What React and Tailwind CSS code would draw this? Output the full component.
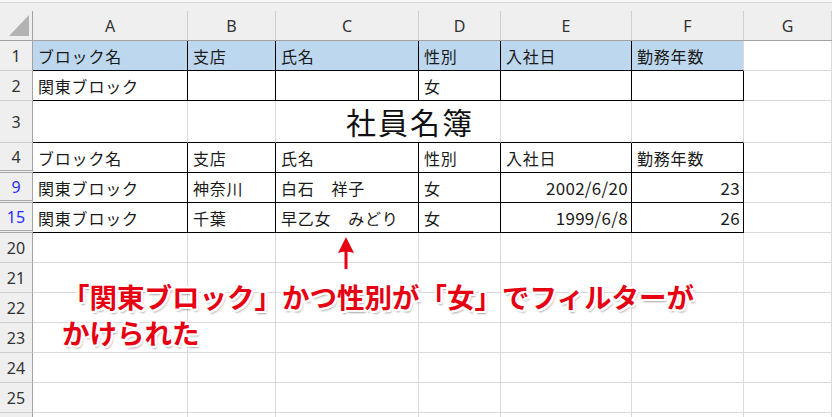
import React from "react";

const COLS = [
  { k: "A", w: 155 },
  { k: "B", w: 88 },
  { k: "C", w: 143 },
  { k: "D", w: 82 },
  { k: "E", w: 131 },
  { k: "F", w: 112 },
  { k: "G", w: 88 },
];

const HEAD = ["ブロック名", "支店", "氏名", "性別", "入社日", "勤務年数"];

const ROWS = [
  { n: "1", cells: HEAD, fill: true },
  { n: "2", cells: ["関東ブロック", "", "", "女", "", ""] },
  { n: "3", title: true },
  { n: "4", cells: HEAD, dbl: true },
  { n: "9", cells: ["関東ブロック", "神奈川", "白石　祥子", "女", "2002/6/20", "23"], blue: true, dbl: true },
  { n: "15", cells: ["関東ブロック", "千葉", "早乙女　みどり", "女", "1999/6/8", "26"], blue: true, dbl: true },
  { n: "20" },
  { n: "21" },
  { n: "22" },
  { n: "23" },
  { n: "24" },
  { n: "25" },
  { n: "26" },
];

const TABLE_ROWS = ["1", "2", "4", "9", "15"];

const inTable = (r, c) => TABLE_ROWS.includes(r) && c < 6;

const RowHeader = ({ row }) => (
  <div
    className={`w-[33px] shrink-0 h-full bg-[#efefef] border-r border-r-[#a3a3a3] flex items-center justify-center text-[16px] font-['Noto_Sans',sans-serif] ${
      row.dbl ? "border-b-[3px] border-double border-b-[#a8a8a8]" : "border-b border-b-[#cdcdcd]"
    } ${row.blue ? "text-[#2b2bff]" : "text-[#333]"}`}
  >
    {row.n}
  </div>
);

const Cell = ({ row, ci, idx }) => {
  const next = ROWS[idx + 1];
  const blackR = inTable(row.n, ci) && !(row.n === "1" && ci === 5);
  const blackB = inTable(row.n, ci) || (next && inTable(next.n, ci));
  const text = row.cells ? row.cells[ci] : "";
  const right = (ci === 4 || ci === 5) && row.blue;
  return (
    <div
      style={{ width: COLS[ci].w }}
      className={`shrink-0 h-full border-r border-b flex items-center pt-[1px] ${
        blackR ? "border-r-black" : "border-r-[#dadada]"
      } ${blackB ? "border-b-black" : "border-b-[#dadada]"} ${
        row.fill && ci < 6 ? "bg-[#bdd7ee]" : "bg-white"
      } ${right ? "justify-end pr-[3px] text-[17px]" : "pl-[5px]"}`}
    >
      <span className={`whitespace-nowrap ${right ? "tracking-[0.3px]" : "tracking-[0.8px]"}`}>{text}</span>
    </div>
  );
};

export default function App() {
  return (
    <div className="relative w-[832px] h-[417px] overflow-hidden bg-white text-[#1a1a1a] text-[16px] font-['Noto_Sans_CJK_JP',sans-serif]">
      {/* column headings */}
      <div className="flex h-[41px] bg-[#efefef] border-b border-b-[#a3a3a3] shadow-[inset_0_2px_0_#f7f7f7,inset_0_3px_0_#d8d8d8]">
        <div className="w-[33px] shrink-0 pt-[11px]">
          <div className="h-full border-r border-r-[#a3a3a3] relative">
            <svg width="22" height="23" viewBox="0 0 22 23" className="absolute left-[8px] top-[3px]">
              <path d="M21 1 L21 22 L1 22 Z" fill="#b3b3b3" />
            </svg>
          </div>
        </div>
        {COLS.map((c) => (
          <div key={c.k} style={{ width: c.w }} className="shrink-0 pt-[11px]">
            <div className="h-full border-r border-r-[#cfcfcf] flex items-center justify-center font-['Noto_Sans',sans-serif] text-[16px] text-[#333]">
              {c.k}
            </div>
          </div>
        ))}
      </div>

      {ROWS.map((row, idx) => (
        <div key={row.n} className={`flex ${row.title ? "h-[42px]" : "h-[30px]"}`}>
          <RowHeader row={row} />
          {row.title ? (
            <>
              <Cell row={row} ci={0} idx={idx} />
              <Cell row={row} ci={1} idx={idx} />
              <div className="w-[225px] shrink-0 h-full border-r border-r-[#dadada] border-b border-b-black flex items-center pl-[70px]">
                <span className="whitespace-nowrap text-[30px] tracking-[2px] text-[#111]">社員名簿</span>
              </div>
              <Cell row={row} ci={4} idx={idx} />
              <Cell row={row} ci={5} idx={idx} />
              <Cell row={row} ci={6} idx={idx} />
            </>
          ) : (
            COLS.map((c, ci) => <Cell key={c.k} row={row} ci={ci} idx={idx} />)
          )}
        </div>
      ))}

      {/* arrow pointing at the filtered rows */}
      <svg width="18" height="34" viewBox="0 0 18 34" className="absolute left-[337px] top-[236px]">
        <rect x="7.5" y="12" width="3" height="21" fill="#e60012" />
        <path d="M9 1 L17 17 Q9 14 1 17 Z" fill="#e60012" />
      </svg>

      {/* annotation */}
      <div className="absolute left-[62px] top-[278px] text-[27.5px] leading-[36px] font-bold text-[#e60012] whitespace-nowrap [text-shadow:2px_0_0_#fff,-2px_0_0_#fff,0_2px_0_#fff,0_-2px_0_#fff,2px_2px_0_#fff,-2px_-2px_0_#fff,2px_-2px_0_#fff,-2px_2px_0_#fff,2px_3px_2px_rgba(0,0,0,0.35)]">
        「関東ブロック」かつ性別が「女」でフィルターが
        <br />
        かけられた
      </div>
    </div>
  );
}
